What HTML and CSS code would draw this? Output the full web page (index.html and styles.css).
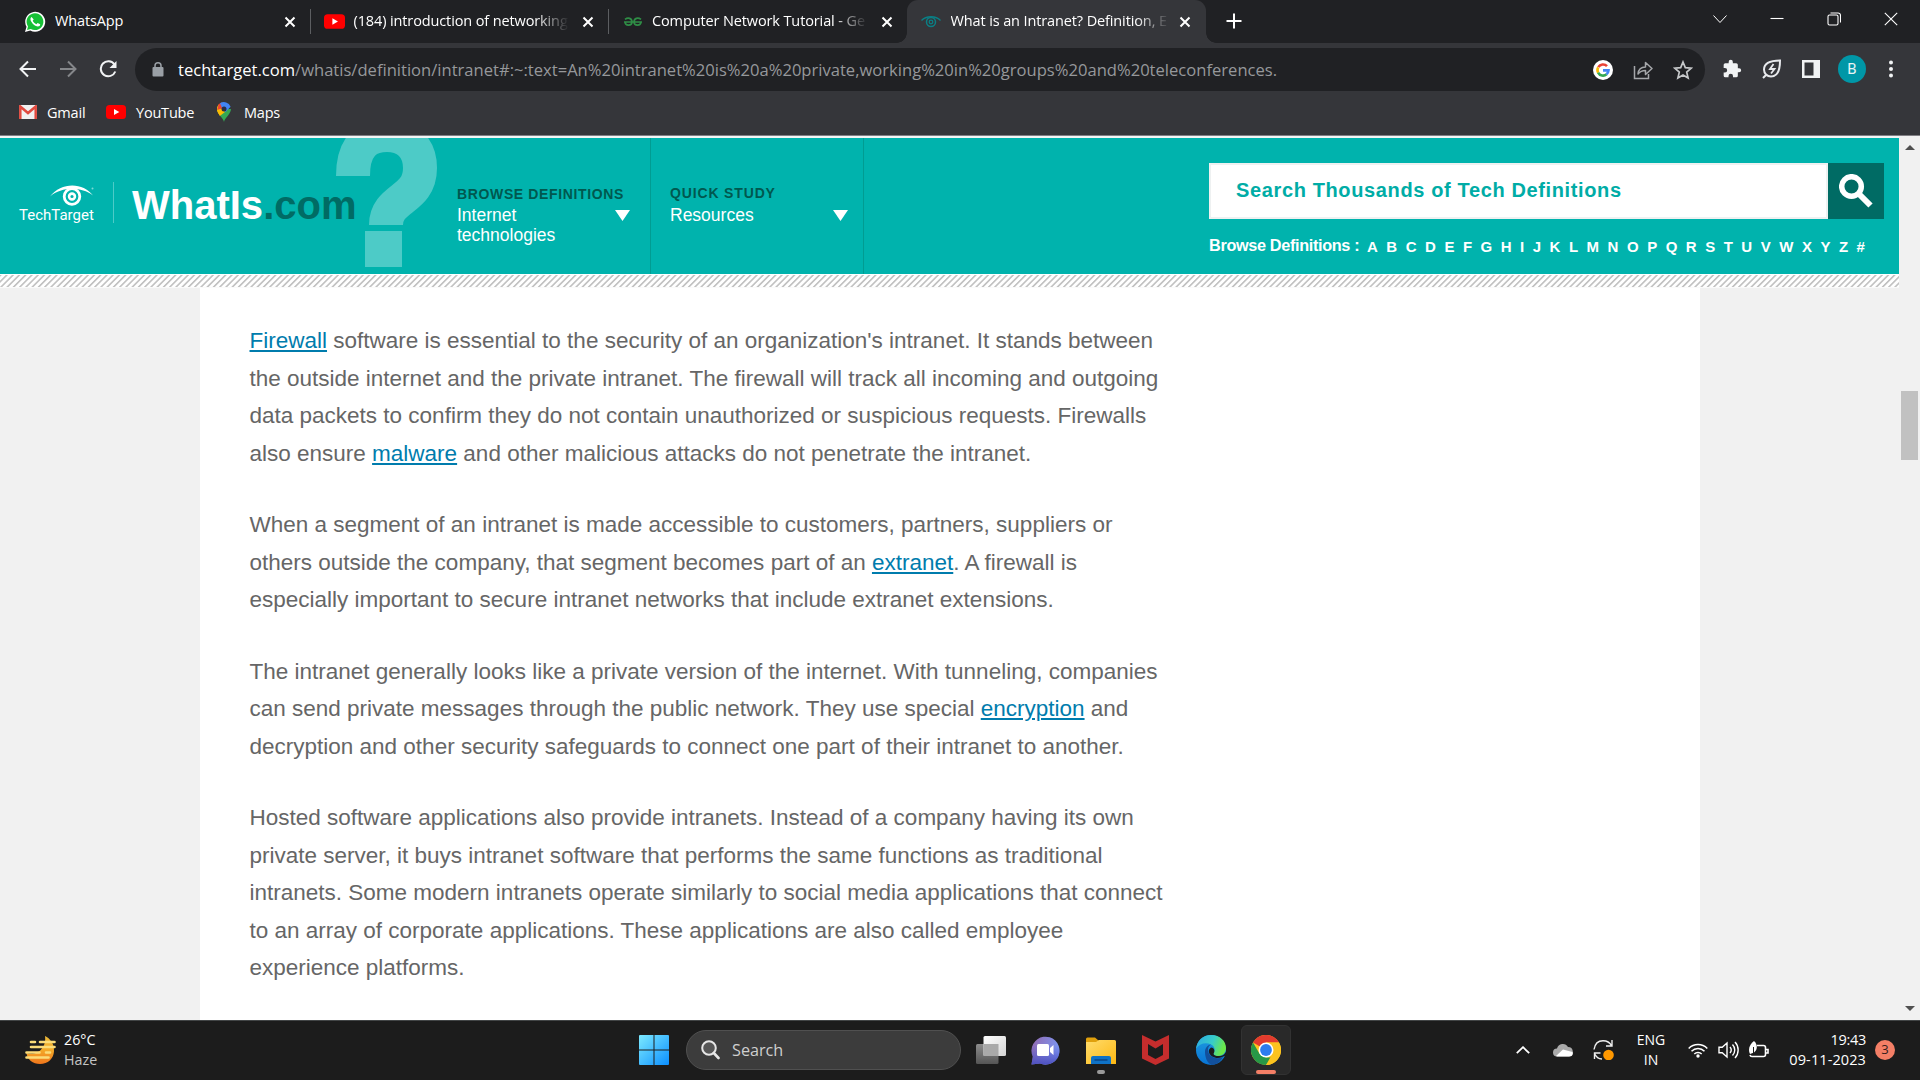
FILE: index.html
```
<!DOCTYPE html>
<html lang="en">
<head>
<meta charset="utf-8">
<title>What is an Intranet? Definition</title>
<link rel="stylesheet" href="styles.css">
</head>
<body>
<svg width="0" height="0" class="defs">
  <defs>
    <symbol id="close" viewBox="0 0 12 12"><path d="M1.5 1.5l9 9M10.500 1.500l-9 9" stroke="currentColor" stroke-width="2" fill="none"/></symbol>
    <symbol id="yt" viewBox="0 0 20 14"><rect width="20" height="14" rx="3.500" fill="#f00"/><path d="M8 4l5.300 3L8 10z" fill="#fff"/></symbol>
    <linearGradient id="winG" x1="0" y1="0" x2="1" y2="1"><stop offset="0" stop-color="#7deaff"/><stop offset="1" stop-color="#0b8fff"/></linearGradient>
    <linearGradient id="tvG" x1="0" y1="0" x2="1" y2="1"><stop offset="0" stop-color="#fff"/><stop offset="1" stop-color="#d4d4d4"/></linearGradient>
    <linearGradient id="tvD" x1="0" y1="0" x2="0" y2="1"><stop offset="0" stop-color="#8c8c8c"/><stop offset="1" stop-color="#555"/></linearGradient>
    <linearGradient id="chatG" x1="0" y1="0" x2="1" y2=".3"><stop offset="0" stop-color="#9368ae"/><stop offset="1" stop-color="#7c96f2"/></linearGradient>
    <linearGradient id="chatB" x1="0" y1="0" x2="0" y2="1"><stop offset=".3" stop-color="#5a5ac8" stop-opacity="0"/><stop offset="1" stop-color="#4c50c0"/></linearGradient>
    <linearGradient id="foldG" x1="0" y1="0" x2="1" y2="1"><stop offset="0" stop-color="#ffdc6c"/><stop offset="1" stop-color="#fdb813"/></linearGradient>
    <linearGradient id="edgeA" x1="0" y1="0" x2="1" y2=".3"><stop offset="0" stop-color="#2aa8e4"/><stop offset=".6" stop-color="#38ccc8"/><stop offset="1" stop-color="#6be84a"/></linearGradient>
    <linearGradient id="edgeB" x1="0" y1="0" x2="0" y2="1"><stop offset="0" stop-color="#1f9de0"/><stop offset="1" stop-color="#0873d4"/></linearGradient>
    <linearGradient id="hazeG" x1="0" y1="0" x2="0" y2="1"><stop offset="0" stop-color="#e9b83a"/><stop offset=".5" stop-color="#f3a928"/><stop offset="1" stop-color="#f0761c"/></linearGradient>
  </defs>
</svg>
<div class="screen">
  <div class="tabstrip">
    <div class="tab">
      <svg class="fav" width="22" height="22" viewBox="0 0 22 22"><path d="M1 21l1.500-5.300A10 10 0 1 1 6.300 19.500z" fill="#fff"/><path d="M3 19l1-3.600A8.400 8.400 0 1 1 6.800 18z" fill="#16c035"/><path d="M7.600 6c-1.300.8-1.500 2.600-.4 4.600 1.600 3 4 4.900 6.600 5 1.400 0 2.400-1 2.400-2.300l-2.600-1.300-1.200 1.300c-1.700-.7-3-2-3.700-3.500l1-1.200z" fill="#fff"/></svg>
      <span class="tab-title">WhatsApp</span>
      <svg class="tab-x" width="12" height="12"><use href="#close"/></svg>
    </div>
    <div class="tab divided">
      <svg class="fav" width="21" height="15"><use href="#yt"/></svg>
      <span class="tab-title fade">(184) introduction of networking</span>
      <svg class="tab-x" width="12" height="12"><use href="#close"/></svg>
    </div>
    <div class="tab divided gfg">
      <svg class="fav" width="18" height="10" viewBox="0 0 18 10"><path d="M0 5h18M1 2.400C4 .2 7.800 1 8 5c-.2 4-6.500 4.500-7 0M17 2.400C14 .2 10.200 1 10 5c.2 4 6.500 4.500 7 0" fill="none" stroke="#2f8d46" stroke-width="1.700"/></svg>
      <span class="tab-title fade">Computer Network Tutorial - Ge</span>
      <svg class="tab-x" width="12" height="12"><use href="#close"/></svg>
    </div>
    <div class="tab active">
      <svg class="fav" width="20" height="12" viewBox="0 0 20 12"><path d="M.5 4.500C5-.5 15-.5 19.500 4.500" fill="none" stroke="#0a7f85" stroke-width="1.300"/><circle cx="10" cy="6" r="4.500" fill="none" stroke="#0a7f85" stroke-width="1.500"/><circle cx="10" cy="6" r="1.800" fill="none" stroke="#0a7f85" stroke-width="1.300"/></svg>
      <span class="tab-title fade">What is an Intranet? Definition, E</span>
      <svg class="tab-x" width="12" height="12"><use href="#close"/></svg>
    </div>
    <svg class="newtab" width="16" height="16" viewBox="0 0 16 16"><path d="M8 .5v15M.5 8h15" stroke="#fff" stroke-width="2"/></svg>
    <div class="winctl">
      <svg width="14" height="14" viewBox="0 0 14 14"><path d="M.5 3.500l6.500 7 6.500-7" stroke-width="1"/></svg>
      <svg width="14" height="14" viewBox="0 0 14 14"><path d="M.5 6.500h13"/></svg>
      <svg width="14" height="14" viewBox="0 0 14 14"><rect x="1" y="3" width="10" height="10" rx="1.500"/><path d="M3.500 1h7.500a2.500 2.500 0 0 1 2.500 2.500v7"/></svg>
      <svg width="14" height="14" viewBox="0 0 14 14"><path d="M.8.8l12.400 12.400M13.200.8L.8 13.200"/></svg>
    </div>
  </div>

  <div class="toolbar">
    <div class="navbtns">
      <svg width="18" height="18" viewBox="0 0 18 18"><path d="M17 9H2M9 1.500L1.500 9 9 16.500" fill="none" stroke="#f1f3f4" stroke-width="2"/></svg>
      <svg width="18" height="18" viewBox="0 0 18 18"><path d="M1 9h15M9 1.500L16.500 9 9 16.500" fill="none" stroke="#85878a" stroke-width="2"/></svg>
      <svg width="18" height="18" viewBox="0 0 18 18"><path d="M15.500 4.500A7.500 7.500 0 1 0 16.300 11.500" fill="none" stroke="#f1f3f4" stroke-width="2"/><path d="M17.500 1v7h-7z" fill="#f1f3f4"/></svg>
    </div>
    <div class="omnibox">
      <svg width="12" height="15" viewBox="0 0 12 15"><rect x=".5" y="5" width="11" height="9.500" rx="1" fill="#9aa0a6"/><path d="M3 6V3.800a3 3 0 0 1 6 0V6" fill="none" stroke="#9aa0a6" stroke-width="1.500"/></svg>
      <span class="url"><b>techtarget.com</b>/whatis/definition/intranet#:~:text=An%20intranet%20is%20a%20private,working%20in%20groups%20and%20teleconferences.</span>
      <div class="omni-icons">
        <svg width="20" height="20" viewBox="0 0 20 20"><circle cx="10" cy="10" r="10" fill="#fff"/><g fill="none" stroke-width="2.600"><path d="M5.300 7.200A5.500 5.500 0 0 1 14 6.200" stroke="#ea4335"/><path d="M5.200 12.700A5.500 5.500 0 0 1 5.200 7.300" stroke="#fbbc04"/><path d="M13.600 14.200A5.500 5.500 0 0 1 5.100 12.600" stroke="#34a853"/><path d="M10 10.400h5.500a5.500 5.500 0 0 1-2 3.900" stroke="#4285f4"/></g></svg>
        <svg width="20" height="20" viewBox="0 0 20 20" fill="none" stroke="#a5a7aa" stroke-width="1.500"><path d="M1.500 6v12.500h14V14"/><path d="M5 14c.5-5 3.500-7 7.500-7V2.500L19 8.500l-6.500 6V10.500C9 10.500 7 11.500 5 14z" stroke-linejoin="round"/></svg>
        <svg width="20" height="20" viewBox="0 0 20 20"><path d="M10 2l2.300 5.600 6 .5-4.600 4 1.400 5.900L10 14.900 4.900 18l1.400-5.900-4.600-4 6-.5z" fill="none" stroke="#c6c8ca" stroke-width="1.700"/></svg>
      </div>
    </div>
    <div class="exts">
      <svg width="20" height="20" viewBox="0 0 24 24"><path d="M20.500 11H19V7a2 2 0 0 0-2-2h-4V3.500a2.500 2.500 0 0 0-5 0V5H4a2 2 0 0 0-2 2v3.800h1.500a2.700 2.700 0 0 1 0 5.400H2V20a2 2 0 0 0 2 2h3.800v-1.500a2.700 2.700 0 0 1 5.400 0V22H17a2 2 0 0 0 2-2v-4h1.500a2.500 2.500 0 0 0 0-5z" fill="#f1f3f4"/></svg>
      <svg width="20" height="20" viewBox="0 0 20 20" fill="none" stroke="#e8eaed" stroke-width="2"><path d="M18 1.500C9 1.500 2 4 2 10.500a7 7 0 0 0 7 7c7 0 9-7 9-16zM1 19l4-4"/><path d="M11.500 5L8 10h4.500L9 14.500" stroke-width="1.800"/></svg>
      <svg width="18" height="18" viewBox="0 0 18 18"><path d="M0 0h18v18H0zM2.500 2.500v13h9v-13z" fill="#f1f3f4" fill-rule="evenodd"/></svg>
      <span class="avatar">B</span>
      <svg class="dots" width="4" height="18" viewBox="0 0 4 18" fill="#f1f3f4"><circle cx="2" cy="2.500" r="2"/><circle cx="2" cy="9" r="2"/><circle cx="2" cy="15.500" r="2"/></svg>
    </div>
  </div>

  <div class="bookmarks">
    <span class="bm gmail"><svg width="18" height="14" viewBox="0 0 18 14"><rect width="18" height="14" rx="1" fill="#f1f1f1"/><path d="M1.300 14V1.500L9 8l7.700-6.500V14" fill="none" stroke="#e04a3f" stroke-width="2.500"/></svg>Gmail</span>
    <span class="bm youtube"><svg width="20" height="14"><use href="#yt"/></svg>YouTube</span>
    <span class="bm maps"><svg width="14" height="20" viewBox="0 0 14 20"><path d="M7 20C6.500 16 0 12 0 7h14c0 5-6.500 9-7 13z" fill="#34a853"/><path d="M0 7a7 7 0 0 1 1.600-4.400L7 7l-4.600 6C1 11.200 0 9.200 0 7z" fill="#fbbc04"/><path d="M1.600 2.600A7 7 0 0 1 4.500.5L9 5 5 9.500.2 8z" fill="#ea4335"/><path d="M3 1.300A7 7 0 0 1 13.600 4.700L8.500 10 5 6z" fill="#4285f4"/><path d="M0 8l4.500-1.500L8 10l-5.200 4z" fill="#fbbc04"/><circle cx="7" cy="7" r="2.500" fill="#2b2f45"/></svg>Maps</span>
  </div>

  <div class="viewport">
    <div class="page">
      <header class="site">
        <div class="brand">
          <div class="tt">
            <svg width="44" height="21" viewBox="0 0 44 21"><path d="M0 11.500C11-3 33-3 43 10.500 31 1.500 12 1.500 0 11.500z" fill="#fff"/><circle cx="22" cy="11.500" r="7.800" fill="#00b3ad" stroke="#fff" stroke-width="2.800"/><circle cx="22" cy="11.500" r="2.900" fill="none" stroke="#fff" stroke-width="2.600"/><circle cx="42.500" cy="3.500" r="1" fill="#7fd9d6"/></svg>
            <span>TechTarget</span>
          </div>
          <div class="whatis">WhatIs<i>.com</i></div>
          <svg class="query" width="103" height="130" viewBox="0 0 103 130"><path d="M18 38C18 8 32-3 52-3c20 0 33 13 33 33 0 33-34 29-34 57" fill="none" stroke="#4dcbc7" stroke-width="34" /><path d="M30 93h37v36H30z" fill="#4dcbc7"/></svg>
        </div>
        <div class="menu browse"><h4>BROWSE DEFINITIONS</h4><p><span>Internet<br>technologies</span><i class="tri"></i></p></div>
        <div class="menu quick"><h4>QUICK STUDY</h4><p><span>Resources</span><i class="tri"></i></p></div>
        <div class="finder">
          <div class="box"><span class="field">Search Thousands of Tech Definitions</span><span class="go"><svg width="34" height="34" viewBox="0 0 34 34" fill="none" stroke="#fff"><circle cx="12.500" cy="12.500" r="9.800" stroke-width="5.500"/><path d="M19.500 19.500L31.500 31.500" stroke-width="6"/></svg></span></div>
          <div class="az"><strong>Browse Definitions :</strong><div class="letters"><a>A</a><a>B</a><a>C</a><a>D</a><a>E</a><a>F</a><a>G</a><a>H</a><a>I</a><a>J</a><a>K</a><a>L</a><a>M</a><a>N</a><a>O</a><a>P</a><a>Q</a><a>R</a><a>S</a><a>T</a><a>U</a><a>V</a><a>W</a><a>X</a><a>Y</a><a>Z</a><a>#</a></div></div>
        </div>
      </header>
      <div class="hatch"></div>
      <main class="article">
        <p><a>Firewall</a> software is essential to the security of an organization's intranet. It stands between<br>the outside internet and the private intranet. The firewall will track all incoming and outgoing<br>data packets to confirm they do not contain unauthorized or suspicious requests. Firewalls<br>also ensure <a>malware</a> and other malicious attacks do not penetrate the intranet.</p>
        <p>When a segment of an intranet is made accessible to customers, partners, suppliers or<br>others outside the company, that segment becomes part of an <a>extranet</a>. A firewall is<br>especially important to secure intranet networks that include extranet extensions.</p>
        <p>The intranet generally looks like a private version of the internet. With tunneling, companies<br>can send private messages through the public network. They use special <a>encryption</a> and<br>decryption and other security safeguards to connect one part of their intranet to another.</p>
        <p>Hosted software applications also provide intranets. Instead of a company having its own<br>private server, it buys intranet software that performs the same functions as traditional<br>intranets. Some modern intranets operate similarly to social media applications that connect<br>to an array of corporate applications. These applications are also called employee<br>experience platforms.</p>
      </main>
    </div>
    <div class="scrollbar"><i class="up"></i><div class="thumb"></div><i class="down"></i></div>
  </div>

  <div class="taskbar">
    <div class="weather">
      <svg width="31" height="30" viewBox="0 0 31 30"><path d="M20 1c5 2.500 9.500 7.500 9 15.500-.5 7-6 12.500-14 12.500C8 29 2 24.500 1.500 18 10 22 22 14 20 1z" fill="url(#hazeG)"/><path d="M6 7h4M15 7h14.500M6 12h23.500M1.500 17.500h13M21 17.500h4M1.500 22.500h22" stroke="#fbdc78" stroke-width="2.600" stroke-linecap="round"/></svg>
      <div class="wtext"><span>26°C</span><span class="dim">Haze</span></div>
    </div>
    <div class="apps">
      <svg class="start" width="30" height="30" viewBox="0 0 30 30"><path d="M1 0h13.500v14.500H0V1a1 1 0 0 1 1-1zM15.500 0H29a1 1 0 0 1 1 1v13.500H15.500zM0 15.500h14.500V30H1a1 1 0 0 1-1-1zM15.500 15.500H30V29a1 1 0 0 1-1 1H15.500z" fill="url(#winG)"/></svg>
      <div class="pill"><svg width="19" height="20" viewBox="0 0 19 20" fill="none" stroke="#e6e6e6"><circle cx="8" cy="8" r="6.800" stroke-width="2" fill="#565656"/><path d="M12.800 13l4.700 5" stroke-width="2.600" stroke-linecap="round"/></svg>Search</div>
      <svg class="tv" width="30" height="28" viewBox="0 0 30 28"><rect y="8" width="22.500" height="20" rx="1.500" fill="url(#tvD)"/><rect x="7.500" width="22.500" height="20" rx="1.500" fill="url(#tvG)"/><path d="M7.500 8h15v12h-15z" fill="#a9a9a9"/></svg>
      <svg class="chat" width="29" height="29" viewBox="0 0 29 29"><path d="M.5 28.500l1.300-8A14 14 0 1 1 9 27.500z" fill="url(#chatG)"/><path d="M.5 28.500l1.300-8A14 14 0 1 1 9 27.500z" fill="url(#chatB)"/><rect x="6" y="8" width="12" height="12" rx="1.500" fill="#fff"/><path d="M19 12l3.500-3v10L19 16z" fill="#fff"/></svg>
      <div class="app folder"><svg width="30" height="27" viewBox="0 0 30 27"><path d="M0 2a1.500 1.500 0 0 1 1.500-1.500H9l3.500 3H28V12H0z" fill="#e0a00c"/><path d="M0 5h10l3-2h15.500A1.500 1.500 0 0 1 30 4.500V27H0z" fill="url(#foldG)"/><path d="M5 27v-6a2 2 0 0 1 2-2h16a2 2 0 0 1 2 2v6z" fill="#0f72c6"/><path d="M8.500 23h13" stroke="#0a3f7c" stroke-width="1.300"/></svg><i class="dot"></i></div>
      <svg class="mc" width="27" height="30" viewBox="0 0 27 30"><path d="M0 0l13.500 6.500L27 0v23.500L13.500 30 0 23.500zM6 9v11l7.500 4 7.500-4V9l-7.500 4.500z" fill="#c52d2d" fill-rule="evenodd"/></svg>
      <svg class="edge" width="30" height="30" viewBox="0 0 30 30"><circle cx="15" cy="15" r="15" fill="url(#edgeB)"/><path d="M0 14C1 5.500 7 0 15 0c9 0 15 6 15 13 0 5-3.500 8-8 8-3.500 0-5-1.500-4.500-3 2-2.500 1.500-6.500-2.500-8.500C10 7 3 8.500 0 14z" fill="url(#edgeA)"/><path d="M9 17c0-4 2.500-7 6-7.500-3 2-3.500 4.500-2.500 8 1.500 4.500 8 7.500 14.500 4.500C24.500 27 20 30 15.500 30 11 28 9 22 9 17z" fill="#12509c"/><path d="M15 12.500c-2 1.500-2.500 3-2 5 1.500 4.500 8 7 13 4.500l4-1.500V17l-2 2.500c-3 2.500-10.500 2-10.500-.8C19.500 16 18 12.500 15 12.500z" fill="#1c1c1c"/></svg>
      <div class="app chrome"><svg width="30" height="30" viewBox="0 0 30 30"><circle cx="15" cy="15" r="15" fill="#fcc31e"/><path d="M15 15L2 7.500A15 15 0 0 1 28 7.500H15z" fill="#e33b2e"/><path d="M2 7.500l6.500 11.300L15 22.500h6.500L15 30A15 15 0 0 1 2 7.500z" fill="#279847"/><path d="M21.500 18.700L15 30a15 15 0 0 0 13-22.500H15z" fill="#fcc31e"/><circle cx="15" cy="15" r="7.500" fill="#fff"/><circle cx="15" cy="15" r="5.900" fill="#2d7cee"/></svg><i class="bar"></i></div>
    </div>
    <div class="tray">
      <svg class="t-up" width="14" height="8" viewBox="0 0 14 8"><path d="M.8 7.200L7 1.200l6.200 6" fill="none" stroke="#fff" stroke-width="1.800"/></svg>
      <svg class="t-cloud" width="20" height="14" viewBox="0 0 20 14"><path d="M4 13.500a4 4 0 0 1 0-8A6 6 0 0 1 15 4a4.800 4.800 0 0 1 1 9.500z" fill="#aaa"/><path d="M3 13l7-6.500 9.500 2.500c1 2.500-.5 4.500-3 4.500H4z" fill="#fff"/></svg>
      <svg class="t-sync" width="21" height="20" viewBox="0 0 21 20" fill="none" stroke="#eee" stroke-width="1.400"><path d="M1 9.500C2 3 6 .7 10 .7c3.500 0 7 2 8.500 5M19 0v6h-6M9 19c-3.500 0-6-2-7.500-5.500M1.500 19v-6h6"/><circle cx="15.500" cy="15" r="5.300" fill="#ff9800" stroke="none"/></svg>
      <div class="lang"><span>ENG</span><span>IN</span></div>
      <svg class="t-wifi" width="20" height="15" viewBox="0 0 20 15" fill="none" stroke="#fff" stroke-width="1.500"><path d="M.7 5.500a13 13 0 0 1 18.600 0M3.500 8.300a9 9 0 0 1 13 0M6.300 11a5.200 5.200 0 0 1 7.400 0"/><circle cx="10" cy="13" r="1.700" fill="#fff" stroke="none"/></svg>
      <svg class="t-vol" width="21" height="18" viewBox="0 0 21 18" fill="none" stroke="#fff" stroke-width="1.400"><path d="M1 6.200h3.200L9 2v14l-4.800-4.200H1zM12 6c1.500 1.800 1.500 4.200 0 6M14.500 3.500c3 3.200 3 7.800 0 11M17 1c4.200 4.500 4.200 11.500 0 16"/></svg>
      <svg class="t-bat" width="21" height="18" viewBox="0 0 21 18"><path d="M9 4.500h6.500a2 2 0 0 1 2 2v7a2 2 0 0 1-2 2H4a2 2 0 0 1-2-1.500M18 8.500h2v3.500h-2" fill="none" stroke="#fff" stroke-width="1.600"/><path d="M6 0c3.500 3 4 8.500 0 11.500L2 13C-.5 8 2 3 6 0z" fill="#fff"/><path d="M5.500 6v8" stroke="#1c1c1c" stroke-width="1"/></svg>
      <div class="clock"><span class="time">19:43</span><span>09-11-2023</span></div>
      <span class="badge">3</span>
    </div>
  </div>
</div>
</body>
</html>
```
FILE: styles.css
```
* { box-sizing: border-box; }
body { margin: 0; font-family: "Open Sans", "Noto Sans", sans-serif; }
.defs { display: block; height: 0; }
svg { display: block; flex: none; }
h4, p { margin: 0; }
.screen { width: 1920px; height: 1080px; display: flex; flex-direction: column; overflow: hidden; background: #35363a; }

/* tab strip */
.tabstrip { height: 43px; background: #202124; display: flex; padding-left: 11px; color: #fff; flex: none; }
.tab { width: 298.500px; height: 43px; display: flex; align-items: center; padding: 0 14px 0 14px; position: relative; }
.tab:first-child { padding-left: 13px; }
.tab .fav { margin-right: 9px; }
.tab:first-child .fav { margin-right: 9px; }
.gfg .fav { margin: 0 10px 0 2px; }
.tab-title { flex: 1; font-size: 14.500px; letter-spacing: -.12px; line-height: 20px; white-space: nowrap; overflow: hidden; margin-right: 13px; padding-bottom: 1px; }
.fade { -webkit-mask-image: linear-gradient(90deg, #000 calc(100% - 34px), transparent); mask-image: linear-gradient(90deg, #000 calc(100% - 34px), transparent); }
.divided::before { content: ""; position: absolute; left: 0; top: 9px; width: 1px; height: 25px; background: #5c5e61; }
.active { background: #35363a; border-radius: 11px 11px 0 0; width: 299px; padding-right: 15px; }
.active .fav { margin: 0 10px 0 0; }
.active .tab-title { margin-right: 9px; }
.active::before, .active::after { content: ""; position: absolute; bottom: 0; width: 10px; height: 10px; }
.active::before { left: -10px; background: radial-gradient(circle at 0 0, transparent 9.500px, #35363a 10px); }
.active::after { right: -10px; background: radial-gradient(circle at 100% 0, transparent 9.500px, #35363a 10px); }
.newtab { margin: 13px 0 0 20px; }
.winctl { margin-left: auto; display: flex; gap: 43px; padding: 12px 22px 0 0; }
.winctl svg { fill: none; stroke: #fff; stroke-width: 1.100; }

/* toolbar */
.toolbar { height: 53px; flex: none; display: flex; align-items: center; padding: 0 26px 0 19px; }
.navbtns { display: flex; gap: 22px; width: 116px; padding-bottom: 1px; }
.omnibox { width: 1570px; height: 43px; border-radius: 22px; background: #202124; display: flex; align-items: center; padding: 0 12px 0 17px; margin-top: 0; }
.url { margin-left: 14px; font-size: 16.580px; line-height: 24px; color: #96989b; white-space: nowrap; padding-top: 1px; }
.url b { font-weight: 400; color: #fff; }
.omni-icons { display: flex; gap: 20px; margin-left: auto; }
.exts { display: flex; align-items: center; gap: 20px; flex: 1; padding-left: 17px; padding-bottom: 1px; }
.exts .avatar { margin-left: -2px; }
.avatar { width: 28px; height: 28px; border-radius: 50%; background: #0097a7; color: #e8f4f5; font: 15px/28px Roboto, sans-serif; text-align: center; }
.dots { margin-left: 3px; }

/* bookmarks */
.bookmarks { height: 39px; flex: none; display: flex; padding: 0 0 7px 19px; color: #fff; font-size: 14.500px; letter-spacing: -.2px; }
.bm { display: flex; align-items: center; }
.gmail svg, .youtube svg { margin-right: 10px; }
.gmail { width: 87px; }
.youtube { width: 111px; }
.maps svg { margin-right: 13px; }

/* page */
.viewport { height: 885px; flex: none; display: flex; border-top: 1px solid #807f84; }
.page { width: 1899px; background: #f1f1f1; border-top: 2px solid #f3f5f5; display: flex; flex-direction: column; }
.site { height: 136px; background: #00b3ad; display: flex; flex: none; font-family: "Liberation Sans", Arial, sans-serif; }
.brand { width: 440px; display: flex; position: relative; }
.tt { width: 114px; height: 41px; margin-top: 44px; border-right: 1px solid #4dcbc7; padding-left: 19px; color: #fff; font: 400 15px/18px Roboto, sans-serif; }
.tt svg { margin: 3px 0 0 31px; }
.tt span { display: block; margin-top: 0; }
.whatis { position: relative; z-index: 1; margin: 43px 0 0 18px; font-size: 40px; font-weight: 700; line-height: 48px; color: #fff; }
.whatis i { font-style: normal; color: #006b64; }
.query { position: absolute; left: 335px; top: 0; }
.menu { padding-top: 48px; padding-left: 17px; border-right: 1px solid #019c92; }
.menu h4 { font-size: 14px; letter-spacing: .64px; line-height: 17px; color: #00584f; white-space: nowrap; }
.menu p { display: flex; justify-content: space-between; color: #fff; font-size: 17.500px; line-height: 20px; margin-top: 2px; }
.browse { width: 211px; padding-right: 20px; }
.quick { width: 213px; padding: 47px 15px 0 19px; }
.quick h4 { letter-spacing: .85px; }
.quick p { margin-top: 3px; }
.tri { width: 15px; height: 11px; background: #fff; clip-path: polygon(0 0, 100% 0, 50% 100%); margin-top: 5px; }
.finder { margin-left: auto; width: 690px; padding-top: 25px; }
.box { display: flex; width: 675px; height: 56px; }
.field { flex: 1; background: #fff; border: 2px solid #eef1f1; padding-left: 25px; color: #00aca6; font-size: 20px; font-weight: 700; letter-spacing: .63px; line-height: 50px; }
.go { width: 56px; background: #006b64; padding: 11px 0 0 11px; }
.az { display: flex; color: #fff; margin-top: 16px; }
.az strong { font-size: 16.250px; letter-spacing: -.34px; line-height: 20px; width: 158px; white-space: nowrap; }
.letters { display: flex; width: 498px; justify-content: space-between; font-size: 15px; font-weight: 700; line-height: 24px; }
.hatch { height: 14px; flex: none; background: repeating-linear-gradient(135deg, #c2c2c2 0 .8px, #fff 1.700px 3.600px, #c2c2c2 4.420px); border-top: 1px solid #fff; border-bottom: 1px solid #fafafa; }
.article { width: 1500px; margin-left: 200px; flex: 1; background: #fff; padding: 34px 0 0 49.500px; font: 22.500px/37.500px "Liberation Sans", Arial, sans-serif; color: #666; white-space: nowrap; overflow: hidden; }
.article p + p { margin-top: 34px; }
.article a { color: #007cad; text-decoration: underline; text-decoration-thickness: 2px; text-underline-offset: 2px; }
.scrollbar { width: 21px; background: #f1f1f1; position: relative; }
.thumb { position: absolute; left: 2px; top: 255px; width: 17px; height: 69px; background: #c1c1c1; }
.up, .down { position: absolute; left: 6px; width: 10px; height: 5px; background: #505050; }
.up { top: 9px; clip-path: polygon(50% 0, 100% 100%, 0 100%); }
.down { bottom: 9px; clip-path: polygon(0 0, 100% 0, 50% 100%); }

/* taskbar */
.taskbar { height: 60px; flex: none; background: #1c1c1c; border-top: 1px solid #424546; display: flex; color: #fff; align-items: center; font-size: 14px; padding-bottom: 1px; }
.weather { width: 639px; display: flex; padding-left: 25px; gap: 8px; align-items: center; }
.wtext { display: flex; flex-direction: column; line-height: 20px; font-size: 14.300px; padding-bottom: 1px; }
.dim { color: #c4c4c4; }
.apps { display: flex; align-items: center; height: 58px; }
.pill { width: 275px; height: 40px; margin: 0 15px 0 17px; border-radius: 20px; background: #3c3c3c; border: 1px solid #505050; display: flex; align-items: center; gap: 12px; padding-left: 14px; font-size: 16.200px; color: #cfcfcf; }
.chat { margin: 0 25px 0 25px; }
.app { display: flex; flex-direction: column; align-items: center; position: relative; }
.folder { margin-left: 1px; }
.mc { margin: 0 27px 0 26px; }
.app i { position: absolute; height: 4px; border-radius: 2px; }
.dot { width: 8px; bottom: -10px; background: #9a9a9a; }
.chrome { width: 50px; height: 50px; margin-left: 15px; border-radius: 6px; background: #292929; border: 1px solid #323232; padding-top: 9px; }
.bar { width: 20px; bottom: 0; background: #f47f66; }
.tray { margin-left: auto; display: flex; align-items: center; padding-right: 25px; }
.t-up { margin-right: 23px; }
.t-cloud { margin-right: 20px; }
.lang { width: 74px; display: flex; flex-direction: column; align-items: center; line-height: 20px; font-size: 14px; padding-bottom: 1px; }
.t-wifi { margin-right: 10px; }
.t-vol { margin-right: 9px; }
.clock { width: 97px; display: flex; flex-direction: column; align-items: flex-end; line-height: 20px; font-size: 14.500px; letter-spacing: .1px; padding-bottom: 1px; }
.time { letter-spacing: -.3px; }
.badge { width: 20px; height: 20px; border-radius: 50%; background: #f47f66; color: #33201c; font-size: 13px; line-height: 19px; text-align: center; margin-left: 9px; }
```
